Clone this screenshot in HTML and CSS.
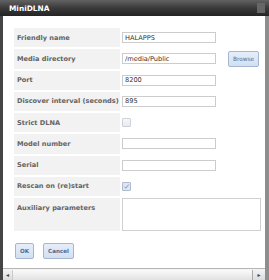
FILE: index.html
```html
<!DOCTYPE html>
<html lang="en">
<head>
    <meta charset="UTF-8">
    <title>MiniDLNA</title>
    <link rel="stylesheet" href="styles.css">
</head>
<body>
    <div class="dialog">
        <div class="titlebar">
            <span class="title">MiniDLNA</span>
            <span class="close-box"></span>
        </div>
        <div class="frame">
            <form class="content" id="minidlna-form">
                <div class="form-grid">
                    <label class="field-label" for="friendly_name">Friendly name</label>
                    <div class="field"><input type="text" id="friendly_name" value="HALAPPS"></div>

                    <label class="field-label" for="media_dir">Media directory</label>
                    <div class="field"><input type="text" id="media_dir" value="/media/Public"><button type="button" class="btn btn-browse">Browse</button></div>

                    <label class="field-label" for="port">Port</label>
                    <div class="field"><input type="text" id="port" value="8200"></div>

                    <label class="field-label" for="interval">Discover interval (seconds)</label>
                    <div class="field"><input type="text" id="interval" value="895"></div>

                    <label class="field-label" for="strict">Strict DLNA</label>
                    <div class="field"><input type="checkbox" class="check" id="strict"></div>

                    <label class="field-label" for="model">Model number</label>
                    <div class="field"><input type="text" id="model"></div>

                    <label class="field-label" for="serial">Serial</label>
                    <div class="field"><input type="text" id="serial"></div>

                    <label class="field-label" for="rescan">Rescan on (re)start</label>
                    <div class="field"><input type="checkbox" class="check" id="rescan" checked></div>

                    <label class="field-label label-top" for="aux">Auxiliary parameters</label>
                    <div class="field field-top"><textarea id="aux"></textarea></div>
                </div>
                <div class="actions">
                    <button type="submit" class="btn">OK</button>
                    <button type="button" class="btn">Cancel</button>
                </div>
            </form>
            <div class="hscroll">
                <span class="arrow">&#9666;</span>
                <span class="thumb"></span>
                <span class="arrow arrow-right">&#9656;</span>
            </div>
        </div>
    </div>
</body>
</html>
```

FILE: styles.css
```css
/* Dialog window */
body {
    margin: 0;
    width: 269px;
    height: 280px;
    overflow: hidden;
    font-family: "DejaVu Sans", Verdana, sans-serif;
    background-color: #ffffff;
}

.dialog {
    display: flex;
    flex-direction: column;
    height: 280px;
}

.titlebar {
    height: 16px;
    display: flex;
    align-items: center;
    justify-content: space-between;
    padding: 0 4px 0 9px;
    background: linear-gradient(#626262, #3a3a3a 50%, #242424); /* dark window header */
}

.title {
    color: #ffffff;
    font-weight: bold;
    font-size: 7.4px;
}

.close-box {
    width: 8px;
    height: 10px;
    background-color: #666666;
}

.frame {
    flex: 1;
    display: flex;
    flex-direction: column;
    border-left: 3px solid #454545;
    border-right: 4px solid #8e8e8e;
    min-height: 0;
}

.content {
    flex: 1;
    margin: 0;
    padding: 12px 4px 0 11px;
}

/* Label / field table */
.form-grid {
    display: grid;
    grid-template-columns: 106px 1fr;
    grid-template-rows: repeat(8, 19.25px) 33px;
    gap: 2px;
}

.field-label {
    display: flex;
    align-items: center;
    padding-left: 3px;
    background-color: #f2f2f2;
    color: #646464;
    font-weight: bold;
    font-size: 6.6px;
    white-space: nowrap;
}

.label-top {
    align-items: flex-start;
    padding-top: 6px;
}

.field {
    display: flex;
    align-items: center;
}

.field-top {
    align-items: flex-start;
}

input[type="text"] {
    box-sizing: border-box;
    width: 94px;
    height: 11px;
    margin: 0;
    padding: 0 2px;
    border: 1px solid #cccccc;
    font-family: inherit;
    font-size: 6.6px;
    color: #333333;
}

textarea {
    box-sizing: border-box;
    width: 139px;
    height: 33px;
    margin: 0;
    border: 1px solid #d0d0d0;
    resize: none;
}

.check {
    appearance: none;
    box-sizing: border-box;
    width: 9px;
    height: 9px;
    margin: 0;
    border: 1px solid #cdd1d8;
    border-radius: 1px;
    background: linear-gradient(#f6f7f9, #e8eaef);
}

.check:checked {
    background: #dfe6f1 url("data:image/svg+xml,%3Csvg xmlns='http://www.w3.org/2000/svg' viewBox='0 0 8 8'%3E%3Cpath d='M1.6 4.2 3.2 5.9 6.5 1.8' fill='none' stroke='%237f94b8' stroke-width='1.1'/%3E%3C/svg%3E") center / 7px 7px no-repeat;
    border-color: #aebbd1;
}

/* Buttons */
.btn {
    height: 16px;
    padding: 0 4px;
    border: 1px solid #a3b6d2;
    border-radius: 2px;
    background: linear-gradient(#e6eef9, #d3dff0);
    color: #4f6b92;
    font-family: inherit;
    font-weight: bold;
    font-size: 5.6px;
    cursor: pointer;
}

.btn-browse {
    width: 31px;
    margin-left: 12px;
    font-weight: normal;
    font-size: 5.8px;
    color: #5a7090;
}

.actions {
    display: flex;
    gap: 9px;
    margin-top: 12px;
    padding-left: 1px;
}

/* Horizontal scrollbar */
.hscroll {
    height: 11px;
    display: flex;
    align-items: center;
    border-top: 1px solid #b5b5b5;
    background: linear-gradient(#f5f5f5, #dcdcdc);
    font-size: 6px;
    color: #444444;
}

.arrow {
    width: 9px;
    text-align: center;
}

.thumb {
    flex: 1;
    height: 10px;
    border-left: 1px solid #c9c9c9;
    border-right: 1px solid #a9a9a9;
    background: linear-gradient(#fafafa, #e2e2e2);
}

.arrow-right {
    width: 12px;
}
```
